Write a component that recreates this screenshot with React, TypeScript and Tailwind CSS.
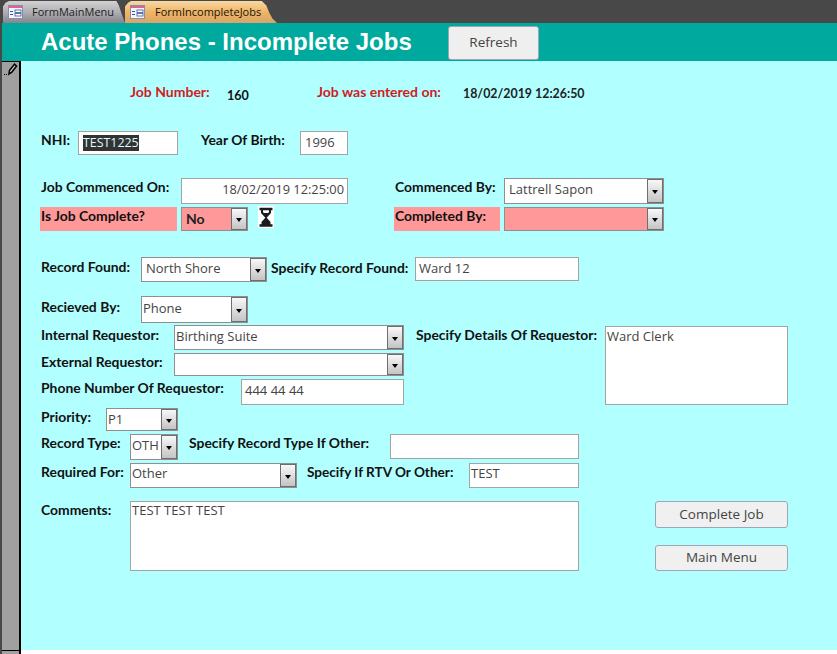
import type { ReactNode } from "react";

function Label({ children, className = "" }: { children: ReactNode; className?: string }) {
  return (
    <span className={`font-['Lato',sans-serif] font-bold text-[13.9px] leading-[15px] text-[#111] whitespace-nowrap ${className}`}>
      {children}
    </span>
  );
}

function Field({ value, className = "", children }: { value?: string; className?: string; children?: ReactNode }) {
  return (
    <div className={`shrink-0 bg-white border border-[#a3a3a3] pl-[3px] pr-[3px] pt-[2px] font-['Open_Sans',sans-serif] text-[13px] leading-[17px] text-[#444] whitespace-nowrap ${className}`}>
      {value}
      {children}
    </div>
  );
}

function Combo({ value, className = "", pink = false, bold = false, tight = false, textTop = "pt-[2px]" }: { value?: string; className?: string; pink?: boolean; bold?: boolean; tight?: boolean; textTop?: string }) {
  return (
    <div className={`shrink-0 flex border border-[#8f8f8f] ${pink ? "bg-[#ff9999]" : "bg-white"} ${className}`}>
      <div className={`flex-1 min-w-0 ${tight ? "pl-[1px]" : "pl-1"} ${textTop} whitespace-nowrap overflow-hidden leading-[17px] ${bold ? "font-['Lato',sans-serif] font-bold text-[14px] text-[#222]" : "font-['Open_Sans',sans-serif] text-[13px] text-[#444]"}`}>
        {value}
      </div>
      <div className="w-[16px] shrink-0 flex items-center justify-center border border-[#6e6e6e] bg-gradient-to-b from-[#f8f8f8] to-[#c4c4c4]">
        <div className="mt-[2px] w-0 h-0 border-l-[3.5px] border-r-[3.5px] border-t-[4px] border-l-transparent border-r-transparent border-t-black" />
      </div>
    </div>
  );
}

function FormIcon() {
  return (
    <svg width="15" height="14" viewBox="0 0 15 14" className="shrink-0">
      <rect x="0.5" y="0.5" width="14" height="13" fill="#f4f4fa" stroke="#8a8cb0" />
      <rect x="1" y="1" width="13" height="2" fill="#d9668c" />
      <rect x="2" y="6" width="3" height="1" fill="#3a55a0" />
      <rect x="2" y="9" width="3" height="1" fill="#3a55a0" />
      <rect x="7" y="5" width="6" height="2.5" fill="#fff" stroke="#3a55a0" strokeWidth="0.8" />
      <rect x="7" y="8.5" width="6" height="2.5" fill="#fff" stroke="#3a55a0" strokeWidth="0.8" />
    </svg>
  );
}

export default function App() {
  return (
    <div className="w-[837px] h-[654px] overflow-hidden bg-white font-['Lato',sans-serif]">
      {/* tab strip */}
      <div className="h-[23px] bg-[#484848] flex items-end pl-[3px]">
        <div className="w-[122px] h-[22px] flex items-center gap-[9px] pl-[5px] bg-gradient-to-b from-[#d2d2d2] via-[#b0b0b4] to-[#85858a] [clip-path:polygon(0_100%,0_25%,2%_8%,5%_0,93%_0,95%_20%,97%_55%,100%_100%)]">
          <FormIcon />
          <span className="font-['Open_Sans',sans-serif] text-[11px] text-[#222]">FormMainMenu</span>
        </div>
        <div className="w-[152px] h-[22px] flex items-center gap-[10px] pl-[5px] bg-gradient-to-b from-[#f8d9a4] via-[#efb565] to-[#d9a468] [clip-path:polygon(0_100%,0_25%,2%_8%,4%_0,90%_0,93%_20%,95%_55%,97%_80%,100%_100%)]">
          <FormIcon />
          <span className="font-['Open_Sans',sans-serif] font-medium text-[11px] text-[#1a1208]">FormIncompleteJobs</span>
        </div>
      </div>

      <div className="h-[631px] flex border-l-2 border-[#484848]">
        {/* record selector */}
        <div className="w-[19px] shrink-0 flex flex-col bg-[#a0a0a0] border-r-2 border-black">
          <div className="h-[38px] -mr-[2px] bg-[#00a99d]" />
          <div className="border-t border-black h-[589px]">
            <svg width="16" height="14" viewBox="0 0 16 14" className="mt-[1px]">
              <path d="M9.5 9.5 L14.5 3 L12.5 1.2 L7.5 7.5 L7 11 Z" fill="#ddd" stroke="#000" strokeWidth="1.6" />
              <rect x="2" y="11" width="1" height="1" fill="#000" />
              <rect x="4" y="11" width="1" height="1" fill="#000" />
            </svg>
          </div>
          <div className="border-t border-black flex-1" />
        </div>

        <div className="flex-1 min-w-0 flex flex-col">
          {/* header */}
          <div className="h-[38px] shrink-0 bg-[#00a99d] flex items-center pl-5">
            <h1 className="font-['Liberation_Sans',sans-serif] font-bold text-[24px] text-white w-[407px] whitespace-nowrap">
              Acute Phones - Incomplete Jobs
            </h1>
            <button className="w-[91px] h-[34px] mt-[1px] rounded-[3px] bg-[#efefef] border border-[#9aa7b5] font-['Open_Sans',sans-serif] text-[13.5px] text-[#444]">
              Refresh
            </button>
          </div>

          {/* form body */}
          <div className="h-[589px] bg-[#b2ffff] pl-5 flex flex-col">
            <div className="flex mt-[23px] h-[20px] items-start">
              <Label className="ml-[89px] w-[97px] !text-[14px] !text-[#d01c1f]">Job Number:</Label>
              <Label className="w-[90px] mt-[4px] !text-[12.6px]">160</Label>
              <Label className="w-[146px] !text-[14px] !text-[#d01c1f]">Job was entered on:</Label>
              <Label className="mt-[2px] !text-[12.4px] !text-[#222]">18/02/2019 12:26:50</Label>
            </div>

            <div className="flex mt-[27px] h-[24px] items-start">
              <Label className="w-[37px] mt-[1px]">NHI:</Label>
              <Field className="w-[100px] h-[24px] !pl-[4px] !pt-[2px]">
                <span className="bg-[#333] text-[#dff] inline-block text-[12.4px] leading-[16px]">TEST1225</span>
              </Field>
              <Label className="ml-[23px] w-[99px] mt-[1px]">Year Of Birth:</Label>
              <Field className="w-[48px] h-[24px] !pl-[4px]" value="1996" />
            </div>

            <div className="flex mt-[23px] h-[26px] items-start">
              <Label className="w-[140px] mt-[1px]">Job Commenced On:</Label>
              <Field className="w-[167px] h-[26px] text-right !text-[12.8px]" value="18/02/2019 12:25:00" />
              <Label className="ml-[47px] w-[109px] mt-[1px]">Commenced By:</Label>
              <Combo className="w-[160px] h-[26px]" value="Lattrell Sapon" />
            </div>

            <div className="flex mt-[3px] h-[24px] items-start">
              <Label className="w-[137px] h-[24px] -ml-[1px] mr-[4px] pl-[1px] pt-[1px] bg-[#ff9999]">Is Job Complete?</Label>
              <Combo className="w-[67px] h-[24px]" value="No" pink bold />
              <svg width="16" height="22" viewBox="0 0 16 22" className="ml-[10px] -mt-[1px] bg-white">
                <path d="M1.5 3 H14.5 M1.5 19.5 H14.5" stroke="#1c1c1c" strokeWidth="2.6" />
                <path d="M4 4 V6.5 L8 11 L12 6.5 V4" fill="none" stroke="#1c1c1c" strokeWidth="2" />
                <path d="M4 7 H12 L8 11 Z" fill="#1c1c1c" />
                <path d="M8 11 L12.5 16 V19 H3.5 V16 Z" fill="#1c1c1c" />
              </svg>
              <Label className="ml-[120px] w-[106px] h-[24px] pl-[1px] pt-[1px] mr-[4px] bg-[#ff9999]">Completed By:</Label>
              <Combo className="w-[160px] h-[24px]" pink />
            </div>

            <div className="flex mt-[26px] h-[25px] items-start">
              <Label className="w-[100px] mt-[2px]">Record Found:</Label>
              <Combo className="w-[126px] h-[25px]" value="North Shore" />
              <Label className="ml-[4px] w-[144px] mt-[3px]">Specify Record Found:</Label>
              <Field className="w-[164px] h-[24px]" value="Ward 12" />
            </div>

            <div className="flex mt-[14px] h-[27px] items-start">
              <Label className="w-[100px] mt-[3px]">Recieved By:</Label>
              <Combo tight className="w-[107px] h-[27px]" value="Phone" textTop="pt-[3px]" />
            </div>

            <div className="flex mt-[2px]">
              <div className="w-[375px] shrink-0 flex flex-col">
                <div className="flex h-[25px] items-start">
                  <Label className="w-[133px] mt-[2px]">Internal Requestor:</Label>
                  <Combo tight className="w-[230px] h-[25px]" value="Birthing Suite" />
                </div>
                <div className="flex mt-[3px] h-[23px] items-start">
                  <Label className="w-[133px] mt-[1px]">External Requestor:</Label>
                  <Combo tight className="w-[230px] h-[23px]" />
                </div>
                <div className="flex mt-[3px] h-[26px] items-start">
                  <Label className="w-[200px] mt-[1px]">Phone Number Of Requestor:</Label>
                  <Field className="w-[163px] h-[26px]" value="444 44 44" />
                </div>
              </div>
              <Label className="w-[189px] mt-[2px]">Specify Details Of Requestor:</Label>
              <Field className="w-[183px] h-[79px] mt-[1px] !pl-[1px] !pt-[1px]" value="Ward Clerk" />
            </div>

            <div className="flex mt-[3px] h-[23px] items-start">
              <Label className="w-[65px] mt-[1px]">Priority:</Label>
              <Combo tight className="w-[72px] h-[23px]" value="P1" />
            </div>

            <div className="flex mt-[3px] h-[26px] items-start">
              <Label className="w-[89px] mt-[1px]">Record Type:</Label>
              <Combo tight className="w-[48px] h-[26px]" value="OTH" />
              <Label className="ml-[11px] w-[201px] mt-[1px]">Specify Record Type If Other:</Label>
              <Field className="w-[189px] h-[25px]" />
            </div>

            <div className="flex mt-[3px] h-[25px] items-start">
              <Label className="w-[89px] mt-[1px]">Required For:</Label>
              <Combo tight className="w-[167px] h-[25px]" value="Other" textTop="pt-[1px]" />
              <Label className="ml-[10px] w-[162px] mt-[2px] !text-[13.6px]">Specify If RTV Or Other:</Label>
              <Field className="w-[110px] h-[25px] !pl-[1px] !pt-[1px]" value="TEST" />
            </div>

            <div className="flex mt-[13px] items-start">
              <Label className="w-[89px] mt-[1px]">Comments:</Label>
              <Field className="w-[449px] h-[70px] !pl-[1px] !pt-0" value="TEST TEST TEST" />
              <div className="ml-[76px] w-[133px] flex flex-col gap-[17px]">
                <button className="h-[27px] rounded-[3px] bg-[#f0f0f0] border border-[#9aa7b5] font-['Open_Sans',sans-serif] text-[13.5px] text-[#444]">
                  Complete Job
                </button>
                <button className="h-[26px] pb-[1px] rounded-[3px] bg-[#f0f0f0] border border-[#9aa7b5] font-['Open_Sans',sans-serif] text-[13.5px] text-[#444]">
                  Main Menu
                </button>
              </div>
            </div>
          </div>
        </div>
      </div>
    </div>
  );
}
